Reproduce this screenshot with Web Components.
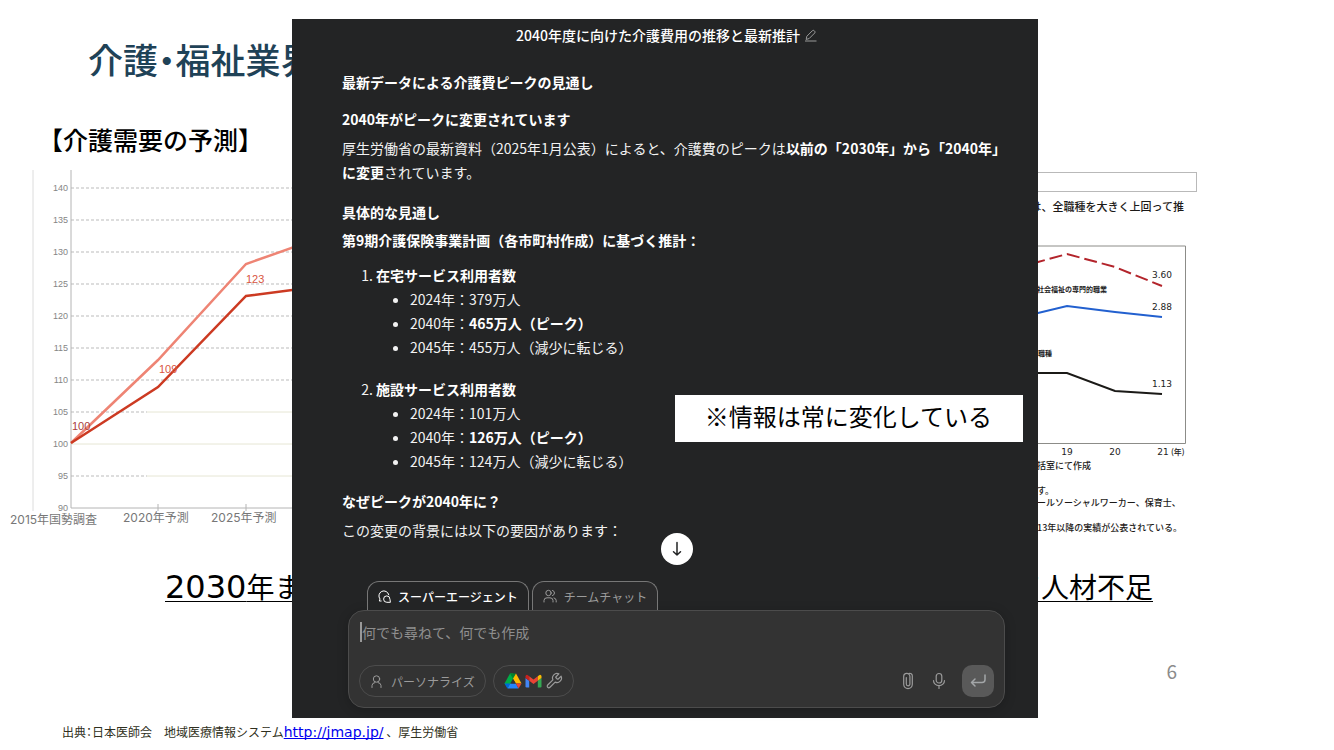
<!DOCTYPE html>
<html lang="ja">
<head>
<meta charset="utf-8">
<meta name="viewport" content="width=device-width, initial-scale=1">
<title>介護・福祉業界</title>
<style>
    body {
        margin: 0;
        background: #fff;
        color: #000;
        font-family: "Noto Sans CJK JP", sans-serif;
    }
</style>
</head>
<body>
<slide-page>
    <demand-chart slot="left"></demand-chart>
    <jobs-figure slot="right"></jobs-figure>
    <chat-panel slot="overlay" heading="2040年度に向けた介護費用の推移と最新推計">
        <chat-answer></chat-answer>
        <chat-composer slot="composer"></chat-composer>
    </chat-panel>
    <note-callout slot="overlay">※情報は常に変化している</note-callout>
</slide-page>

<script>
class SlidePage extends HTMLElement {
    constructor() {
        super()
        const shadowRoot = this.attachShadow({ mode: 'open' })
        shadowRoot.innerHTML = `
            <style>
                :host {
                    display: flex;
                    flex-direction: column;
                    position: relative;
                    min-height: 100vh;
                    box-sizing: border-box;
                    padding-top: 35px;
                    overflow: hidden;
                }
                h1, h2, p { margin: 0; }
                h1 {
                    padding-left: 88px;
                    font-size: 35px;
                    line-height: 48px;
                    font-weight: 500;
                    color: #1f4257;
                }
                .half { font-feature-settings: "halt"; }
                h2 {
                    margin-top: 36px;
                    padding-left: 38px;
                    font-size: 25px;
                    line-height: 40px;
                    font-weight: 500;
                }
                .charts {
                    display: flex;
                    justify-content: space-between;
                    margin-top: 11px;
                    height: 384px;
                }
                .message {
                    display: flex;
                    justify-content: space-between;
                    padding: 0 181px 0 165px;
                    margin-top: 12px;
                    font-size: 28px;
                    line-height: 40px;
                }
                .message span {
                    text-decoration: underline;
                    text-decoration-thickness: 1px;
                    text-decoration-skip-ink: none;
                    text-underline-offset: 3px;
                }
                .message b {
                    font: 400 32px "DejaVu Sans", sans-serif;
                }
                .number {
                    margin-top: 51px;
                    padding-right: 157px;
                    text-align: right;
                    font-size: 19px;
                    line-height: 28px;
                    color: #8b8b8b;
                }
                footer {
                    margin-top: 37px;
                    padding-left: 62px;
                    font-size: 12px;
                    line-height: 20px;
                    color: #2f3020;
                }
                a {
                    font-family: "DejaVu Sans", sans-serif;
                    font-size: 14px;
                    color: #0000ee;
                    text-decoration-skip-ink: none;
                }
            </style>
            <h1>介護<span class="half">・</span>福祉業界</h1>
            <h2>【介護需要の予測】</h2>
            <div class="charts">
                <slot name="left"></slot>
                <slot name="right"></slot>
            </div>
            <p class="message">
                <span><b>2030</b>年ま</span>
                <span>て人材不足</span>
            </p>
            <p class="number">6</p>
            <footer>出典<span class="half">：</span>日本医師会　地域医療情報システム<a href="http://jmap.jp/">http://jmap.jp/</a> 、厚生労働省</footer>
            <slot name="overlay"></slot>
        `
    }
}

class DemandChart extends HTMLElement {
    constructor() {
        super()
        this.attachShadow({ mode: 'open' })
    }

    connectedCallback() {
        this.render()
    }

    render() {
        const ticks = [140, 135, 130, 125, 120, 115, 110, 105, 100, 95, 90]
        const y = i => 18 + i * 32
        const grid = ticks.map((t, i) => {
            if (t === 100) return `<path class="pale" d="M71 ${y(i)}H300"/>`
            if (t === 105 || t === 95) return `<path class="dash" d="M71 ${y(i)}H147"/><path class="pale" d="M147 ${y(i)}H300"/>`
            if (t === 90) return `<path class="axis" d="M71 ${y(i)}H300"/>`
            return `<path class="dash" d="M71 ${y(i)}H300"/>`
        }).join('')
        const labels = ticks.map((t, i) => `<text class="tick" x="68" y="${y(i) + 3}">${t}</text>`).join('')
        this.shadowRoot.innerHTML = `
            <style>
                :host { display: block; flex: none; }
                svg { display: block; }
                text { font-family: "Liberation Sans Narrow", "Liberation Sans", sans-serif; }
                path, polyline { fill: none; }
                .tick { font-size: 9px; text-anchor: end; fill: #858585; }
                .value { font-size: 11px; fill: #d9553f; }
                .year { font: 12px "Inter", "Noto Sans CJK JP", sans-serif; fill: #777; }
                .dash { stroke: #bbb; stroke-dasharray: 3 2; }
                .pale { stroke: #e6e6d4; }
                .axis { stroke: #b4b4b4; }
                .frame { stroke: #dcdcdc; }
            </style>
            <svg width="300" height="364" viewBox="0 0 300 364" role="img" aria-label="介護需要の予測">
                <path class="frame" d="M33 0V341"/>
                ${grid}
                <path class="axis" d="M71 0V338M158 334V341M246 334V341"/>
                ${labels}
                <polyline points="71,273 158,190 246,94 300,75" stroke="#ee8474" stroke-width="2.5"/>
                <polyline points="71,273 158,217 246,126 300,119" stroke="#cc3a22" stroke-width="2.5"/>
                <text class="value" x="72" y="260" style="fill:#a8403c">100</text>
                <text class="value" x="159" y="203">109</text>
                <text class="value" x="246" y="113">123</text>
                <text class="year" x="10" y="354">2015年国勢調査</text>
                <text class="year" x="123" y="352">2020年予測</text>
                <text class="year" x="211" y="352">2025年予測</text>
            </svg>
        `
    }
}

class JobsFigure extends HTMLElement {
    constructor() {
        super()
        const shadowRoot = this.attachShadow({ mode: 'open' })
        shadowRoot.innerHTML = `
            <style>
                :host {
                    display: block;
                    flex: none;
                    width: 334px;
                    color: #1c1a18;
                    font-weight: 500;
                }
                p { margin: 0; }
                .box {
                    box-sizing: border-box;
                    width: 197px;
                    height: 20px;
                    margin-top: 2px;
                    border: 1px solid #b9b9b9;
                }
                .caption {
                    width: 184px;
                    margin-top: 4px;
                    text-align: right;
                    white-space: nowrap;
                    font-size: 11px;
                    line-height: 20px;
                }
                svg { display: block; margin-top: 29px; }
                polyline, path { fill: none; stroke-width: 2; }
                text { fill: #222; }
                .num { font: 9px "DejaVu Sans", sans-serif; text-anchor: middle; }
                .name { font-size: 7px; font-weight: 700; }
                .notes {
                    font-size: 9px;
                    line-height: 12px;
                    padding-left: 37px;
                }
                .notes p + p { margin-top: 13px; }
            </style>
            <div class="box"></div>
            <p class="caption">は、全職種を大きく上回って推</p>
            <svg width="200" height="215" viewBox="0 0 200 215" role="img" aria-label="有効求人倍率">
                <path d="M0 1H185.500V198.500H0" stroke="#8c8c88" style="stroke-width:1"/>
                <polyline points="20,23 38,17 67,9 115,22 162,41" stroke="#b3242b" stroke-dasharray="13 5" stroke-dashoffset="5"/>
                <polyline points="20,72 38,68 67,61 115,67 162,72" stroke="#2260cf"/>
                <polyline points="20,128 67,128 115,146 162,149" stroke="#1b1a17"/>
                <text class="num" x="162" y="33">3.60</text>
                <text class="num" x="162" y="65">2.88</text>
                <text class="num" x="162" y="142">1.13</text>
                <text class="name" x="37" y="47">社会福祉の専門的職業</text>
                <text class="name" x="31" y="111">全職種</text>
                <text class="num" x="67" y="210">19</text>
                <text class="num" x="115" y="210">20</text>
                <text class="num" x="163" y="210">21</text>
                <text x="171" y="210" font-size="8">(年)</text>
            </svg>
            <div class="notes">
                <p>括室にて作成</p>
                <p>す。<br>ールソーシャルワーカー、保育士、</p>
                <p>13年以降の実績が公表されている。</p>
            </div>
        `
    }
}

class ChatPanel extends HTMLElement {
    constructor() {
        super()
        const shadowRoot = this.attachShadow({ mode: 'open' })
        shadowRoot.innerHTML = `
            <style>
                :host {
                    display: flex;
                    flex-direction: column;
                    position: absolute;
                    top: 19px;
                    left: 292px;
                    right: 296px;
                    box-sizing: border-box;
                    padding: 4px 33px 10px 50px;
                    background: #232425;
                    color: #fff;
                }
                header {
                    display: flex;
                    justify-content: center;
                    align-items: center;
                    gap: 4px;
                    margin-right: 14px;
                    height: 24px;
                }
                h2 { margin: 0; font-size: 14px; font-weight: 500; }
                button {
                    display: flex;
                    padding: 0;
                    border: 0;
                    background: none;
                    color: #9a9a9a;
                }
            </style>
            <header>
                <h2></h2>
                <button aria-label="タイトルを編集">
                    <svg width="13" height="13" viewBox="0 0 13 13" fill="none" stroke="currentColor" stroke-linejoin="round">
                        <path d="M2.200 10.500L2.800 7.300L8.400 1.700Q9.300.9 10.200 1.700L10.700 2.200Q11.500 3.100 10.700 4L5.200 9.500ZM1 12H12.500"/>
                    </svg>
                </button>
            </header>
            <slot></slot>
            <slot name="composer"></slot>
        `
    }

    connectedCallback() {
        this.shadowRoot.querySelector('h2').textContent = this.getAttribute('heading')
    }
}

class ChatAnswer extends HTMLElement {
    constructor() {
        super()
        this.attachShadow({ mode: 'open' })
        this.services = [
            { name: '在宅サービス利用者数', now: '379万人', peak: '465万人', after: '455万人' },
            { name: '施設サービス利用者数', now: '101万人', peak: '126万人', after: '124万人' }
        ]
    }

    connectedCallback() {
        this.render()
    }

    render() {
        this.shadowRoot.innerHTML = `
            <style>
                :host {
                    display: block;
                    margin-top: 23px;
                    font-size: 14px;
                    line-height: 24px;
                    color: #f2f2f2;
                }
                h3, h4, p, ol, ul { margin: 0; font-size: 14px; }
                h3, h4, strong { font-weight: 700; color: #fff; }
                h3 { margin-top: 16px; }
                h3:first-of-type { margin-top: 0; }
                h4 { margin-top: 4px; }
                h4:first-of-type { margin-top: 13px; }
                p { margin-top: 5px; }
                ol { padding-left: 34px; margin-top: 11px; }
                ol > li + li { margin-top: 18px; }
                ul { padding-left: 34px; list-style: disc; }
            </style>
            <h3>最新データによる介護費ピークの見通し</h3>
            <h4>2040年がピークに変更されています</h4>
            <p>厚生労働省の最新資料（2025年1月公表）によると、介護費のピークは<strong>以前の「2030年」から「2040年」に変更</strong>されています。</p>
            <h3>具体的な見通し</h3>
            <h4>第9期介護保険事業計画（各市町村作成）に基づく推計：</h4>
            <ol>
                ${this.services.map(s => `<li><strong>${s.name}</strong>
                    <ul>
                        <li>2024年：${s.now}</li>
                        <li>2040年：<strong>${s.peak}（ピーク）</strong></li>
                        <li>2045年：${s.after}（減少に転じる）</li>
                    </ul>
                </li>`).join('')}
            </ol>
            <h3>なぜピークが2040年に？</h3>
            <p>この変更の背景には以下の要因があります：</p>
        `
    }
}

class ChatComposer extends HTMLElement {
    constructor() {
        super()
        const shadowRoot = this.attachShadow({ mode: 'open' })
        shadowRoot.innerHTML = `
            <style>
                :host {
                    display: block;
                    position: relative;
                    margin: 39px 0 0 6px;
                }
                button {
                    display: flex;
                    align-items: center;
                    justify-content: center;
                    box-sizing: border-box;
                    padding: 0;
                    border: 0;
                    background: none;
                    font: inherit;
                    color: #9b9b9b;
                }
                svg { flex: none; fill: none; stroke: currentColor; stroke-linecap: round; stroke-linejoin: round; }
                .down {
                    position: absolute;
                    left: 50%;
                    top: -48px;
                    width: 32px;
                    height: 32px;
                    margin-left: -16px;
                    border-radius: 50%;
                    background: #fff;
                    color: #232425;
                }
                .tabs { display: flex; gap: 3px; padding-left: 19px; font-size: 12px; }
                .tabs button {
                    gap: 7px;
                    height: 29px;
                    padding: 0 10px;
                    border: 1px solid #777;
                    border-bottom: 0;
                    border-radius: 12px 12px 0 0;
                    background: #2a2a2b;
                }
                .tabs .active { background: #232425; color: #fff; font-weight: 500; }
                .input {
                    box-sizing: border-box;
                    border: 1px solid #4c4c4c;
                    border-radius: 16px;
                    padding: 11px 10px 10px;
                    background: #333;
                    box-shadow: 0 2px 12px rgba(0, 0, 0, .2);
                }
                textarea {
                    display: block;
                    box-sizing: border-box;
                    width: 100%;
                    height: 20px;
                    margin-left: 1px;
                    padding: 0;
                    border: 0;
                    border-left: 2px solid #999;
                    outline: 0;
                    resize: none;
                    overflow: hidden;
                    background: none;
                    color: #fff;
                    font: inherit;
                    font-size: 14px;
                    line-height: 20px;
                }
                textarea::placeholder { color: #8f8f8f; opacity: 1; }
                .tools { display: flex; align-items: center; gap: 7px; margin-top: 23px; font-size: 12px; }
                .pill {
                    height: 32px;
                    padding: 0 10px;
                    border: 1px solid #4c4c4c;
                    border-radius: 16px;
                    gap: 8px;
                }
                .apps { gap: 3px; }
                .space { flex: 1; }
                .icon { width: 24px; height: 24px; }
                .send {
                    width: 32px;
                    height: 32px;
                    margin-left: 4px;
                    border-radius: 10px;
                    background: #595959;
                    color: #a3a6a8;
                }
            </style>
            <button class="down" aria-label="一番下へ">
                <svg width="16" height="16" viewBox="0 0 16 16" stroke-width="1.500"><path d="M8 1.500V14M4.500 10.800L8 14L11.500 10.800"/></svg>
            </button>
            <div class="tabs">
                <button class="active">
                    <svg width="13" height="13" viewBox="0 0 13 13"><path d="M3.200 11H1.300L2 9A5 5 0 1 1 10.800 4.800M12 12.300H8.800A3.200 3.200 0 1 1 12 9.100Z"/></svg>
                    スーパーエージェント
                </button>
                <button>
                    <svg width="14" height="14" viewBox="0 0 14 14"><circle cx="5.500" cy="4" r="2.700"/><path d="M1 13V11.500Q1 8.800 4 8.800H7Q10 8.800 10 11.500V13M9.500 1.400A2.700 2.700 0 0 1 9.500 6.600M11 8.900Q13.200 9.500 13.200 11.500V13"/></svg>
                    チームチャット
                </button>
            </div>
            <div class="input">
                <textarea rows="1" placeholder="何でも尋ねて、何でも作成" aria-label="メッセージ"></textarea>
                <div class="tools">
                    <button class="pill">
                        <svg width="13" height="13" viewBox="0 0 13 13"><circle cx="6.500" cy="4" r="3.200"/><path d="M2 12.500V10.500Q2 8 5 7.500M11 12.500V10.500Q11 8 8 7.500"/></svg>
                        パーソナライズ
                    </button>
                    <button class="pill apps" aria-label="連携ツール">
                        <svg width="18" height="16" viewBox="0 0 18 16" style="stroke:none">
                            <path fill="#00ac47" d="M6 .5H9L11.300 4.500L4 15.200L.5 10.500Z"/>
                            <path fill="#00832d" d="M6 .5H12L9 5.700Z"/>
                            <path fill="#ffba00" d="M9 5.700L12 .5L17.500 10.500H11.800Z"/>
                            <path fill="#2684fc" d="M6.200 10.500H11.800L14.500 15.500H3.500Z"/>
                            <path fill="#0066da" d="M.5 10.500H6.200L3.400 15.500Z"/>
                            <path fill="#ea4335" d="M11.800 10.500H17.500L14.600 15.500Z"/>
                            <path fill="#333" d="M9 5.700L11.800 10.500H6.200Z"/>
                        </svg>
                        <svg width="17" height="14" viewBox="0 0 17 14" style="stroke:none">
                            <path fill="#4285f4" d="M.5 4L4.200 6.800V13.500H1.700Q.5 13.500.5 12.300Z"/>
                            <path fill="#34a853" d="M16.500 4L12.800 6.800V13.500H15.300Q16.500 13.500 16.500 12.300Z"/>
                            <path fill="#ea4335" d="M4.200 2.300L8.500 5.500L12.800 2.300V6.800L8.500 10L4.200 6.800Z"/>
                            <path fill="#c5221f" d="M.5 2.500Q.5.7 2 .7Q2.700.7 4.200 2.300V6.800L.5 4Z"/>
                            <path fill="#fbbc04" d="M16.500 2.500Q16.500.7 15 .7Q14.300.7 12.800 2.300V6.800L16.500 4Z"/>
                        </svg>
                        <svg width="18" height="18" viewBox="0 0 24 24" stroke-width="1.600"><path d="M14.700 6.300a1 1 0 0 0 0 1.400l1.600 1.600a1 1 0 0 0 1.400 0l3.770-3.770a6 6 0 0 1-7.940 7.940l-6.910 6.910a2.120 2.120 0 0 1-3-3l6.910-6.910a6 6 0 0 1 7.940-7.940l-3.760 3.760z"/></svg>
                    </button>
                    <span class="space"></span>
                    <button class="icon" aria-label="ファイルを添付">
                        <svg width="12" height="18" viewBox="0 0 12 18" stroke-width="1.200"><path d="M10.300 5V12.300A4.300 4.300 0 0 1 1.700 12.300V4.500A3 3 0 0 1 7.900 4.500V12A1.800 1.800 0 0 1 4.300 12V5.500M10.300 5V3.800A2.500 2.500 0 0 0 7 1.500"/></svg>
                    </button>
                    <button class="icon" aria-label="音声入力">
                        <svg width="14" height="18" viewBox="0 0 14 18" stroke-width="1.200"><rect x="4.200" y="1.500" width="5.600" height="9.500" rx="2.800"/><path d="M1.500 8.500A5.500 5.200 0 0 0 12.500 8.500M7 13.700V16.500"/></svg>
                    </button>
                    <button class="send" aria-label="送信">
                        <svg width="16" height="16" viewBox="0 0 16 16" stroke-width="1.500"><path d="M15 2V6.500Q15 9.500 12 9.500H1.500M5 6L1.500 9.500L5 13"/></svg>
                    </button>
                </div>
            </div>
        `
    }
}

class NoteCallout extends HTMLElement {
    constructor() {
        super()
        const shadowRoot = this.attachShadow({ mode: 'open' })
        shadowRoot.innerHTML = `
            <style>
                :host {
                    display: block;
                    position: absolute;
                    top: 395px;
                    right: 311px;
                    padding: 1px 31px 6px 30px;
                    background: #fff;
                    color: #000;
                    font-size: 24px;
                    line-height: 40px;
                }
            </style>
            <slot></slot>
        `
    }
}

customElements.define('slide-page', SlidePage)
customElements.define('demand-chart', DemandChart)
customElements.define('jobs-figure', JobsFigure)
customElements.define('chat-panel', ChatPanel)
customElements.define('chat-answer', ChatAnswer)
customElements.define('chat-composer', ChatComposer)
customElements.define('note-callout', NoteCallout)
</script>
</body>
</html>
